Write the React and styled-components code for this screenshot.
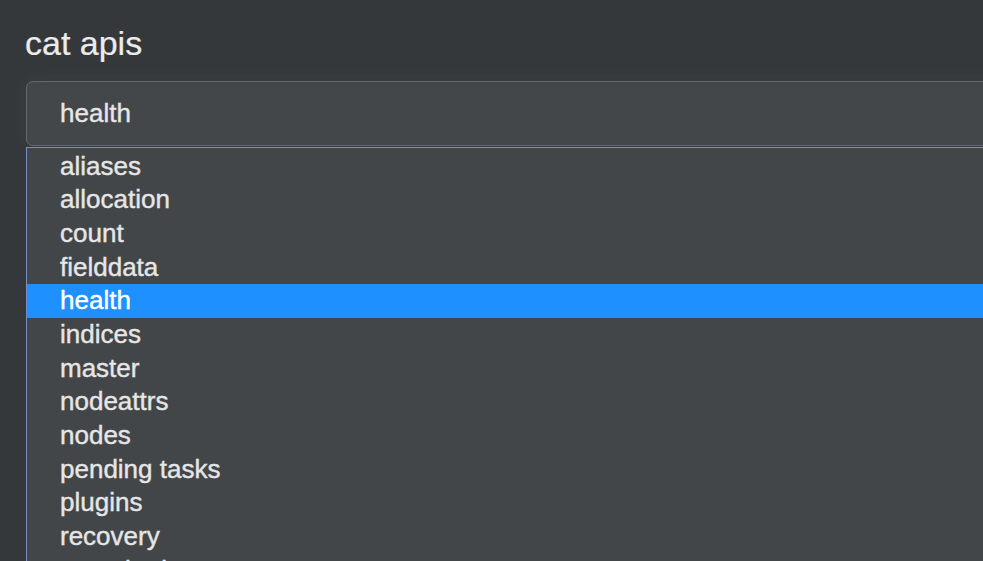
import styled, { createGlobalStyle } from "styled-components";

const GlobalStyle = createGlobalStyle`
	html, body {
		margin: 0;
		padding: 0;
		background-color: #35383b;
		overflow: hidden;
	}
`;

const Page = styled.div`
	width: 1100px;
	height: 561px;
	padding: 23px 0 0 26px;
	box-sizing: border-box;
	font-family: "Liberation Sans", Arial, sans-serif;
	color: #e6e6e6;
`;

const Title = styled.h2`
	margin: 0 0 18px -1px;
	font-size: 34px;
	font-weight: normal;
	line-height: 40px;
	color: #ececec;
	-webkit-text-stroke: 0.2px #ececec;
`;

const SelectBox = styled.div`
	height: 65px;
	box-sizing: border-box;
	display: flex;
	align-items: center;
	padding-left: 33px;
	background-color: #44474a;
	border: 1.5px solid #65686c;
	border-radius: 7px;
	box-shadow: 0 0 22px rgba(255, 255, 255, 0.05);
	font-size: 26px;
	-webkit-text-stroke: 0.4px #e6e6e6;
`;

const List = styled.ul`
	list-style: none;
	margin: 1px 0 0;
	padding: 1.5px 0 0;
	background-color: #434649;
	border-top: 1.5px solid #7a8cc4;
	border-left: 1.5px solid #7a8cc4;
`;

const Option = styled.li`
	height: 33.7px;
	line-height: 33.7px;
	padding-left: 33px;
	font-size: 26px;
	background-color: ${(p) => (p.$active ? "#1e90ff" : "transparent")};
	color: ${(p) => (p.$active ? "#ffffff" : "#e6e6e6")};
	-webkit-text-stroke: 0.4px ${(p) => (p.$active ? "#ffffff" : "#e6e6e6")};
	white-space: nowrap;
`;

const options = [
	"aliases",
	"allocation",
	"count",
	"fielddata",
	"health",
	"indices",
	"master",
	"nodeattrs",
	"nodes",
	"pending tasks",
	"plugins",
	"recovery",
	"repositories",
];

const App = () => {
	const selected = "health";
	return (
		<>
			<GlobalStyle />
			<Page>
				<Title>cat apis</Title>
				<SelectBox>{selected}</SelectBox>
				<List>
					{options.map((o) => (
						<Option key={o} $active={o === selected}>
							{o}
						</Option>
					))}
				</List>
			</Page>
		</>
	);
};

export default App;
